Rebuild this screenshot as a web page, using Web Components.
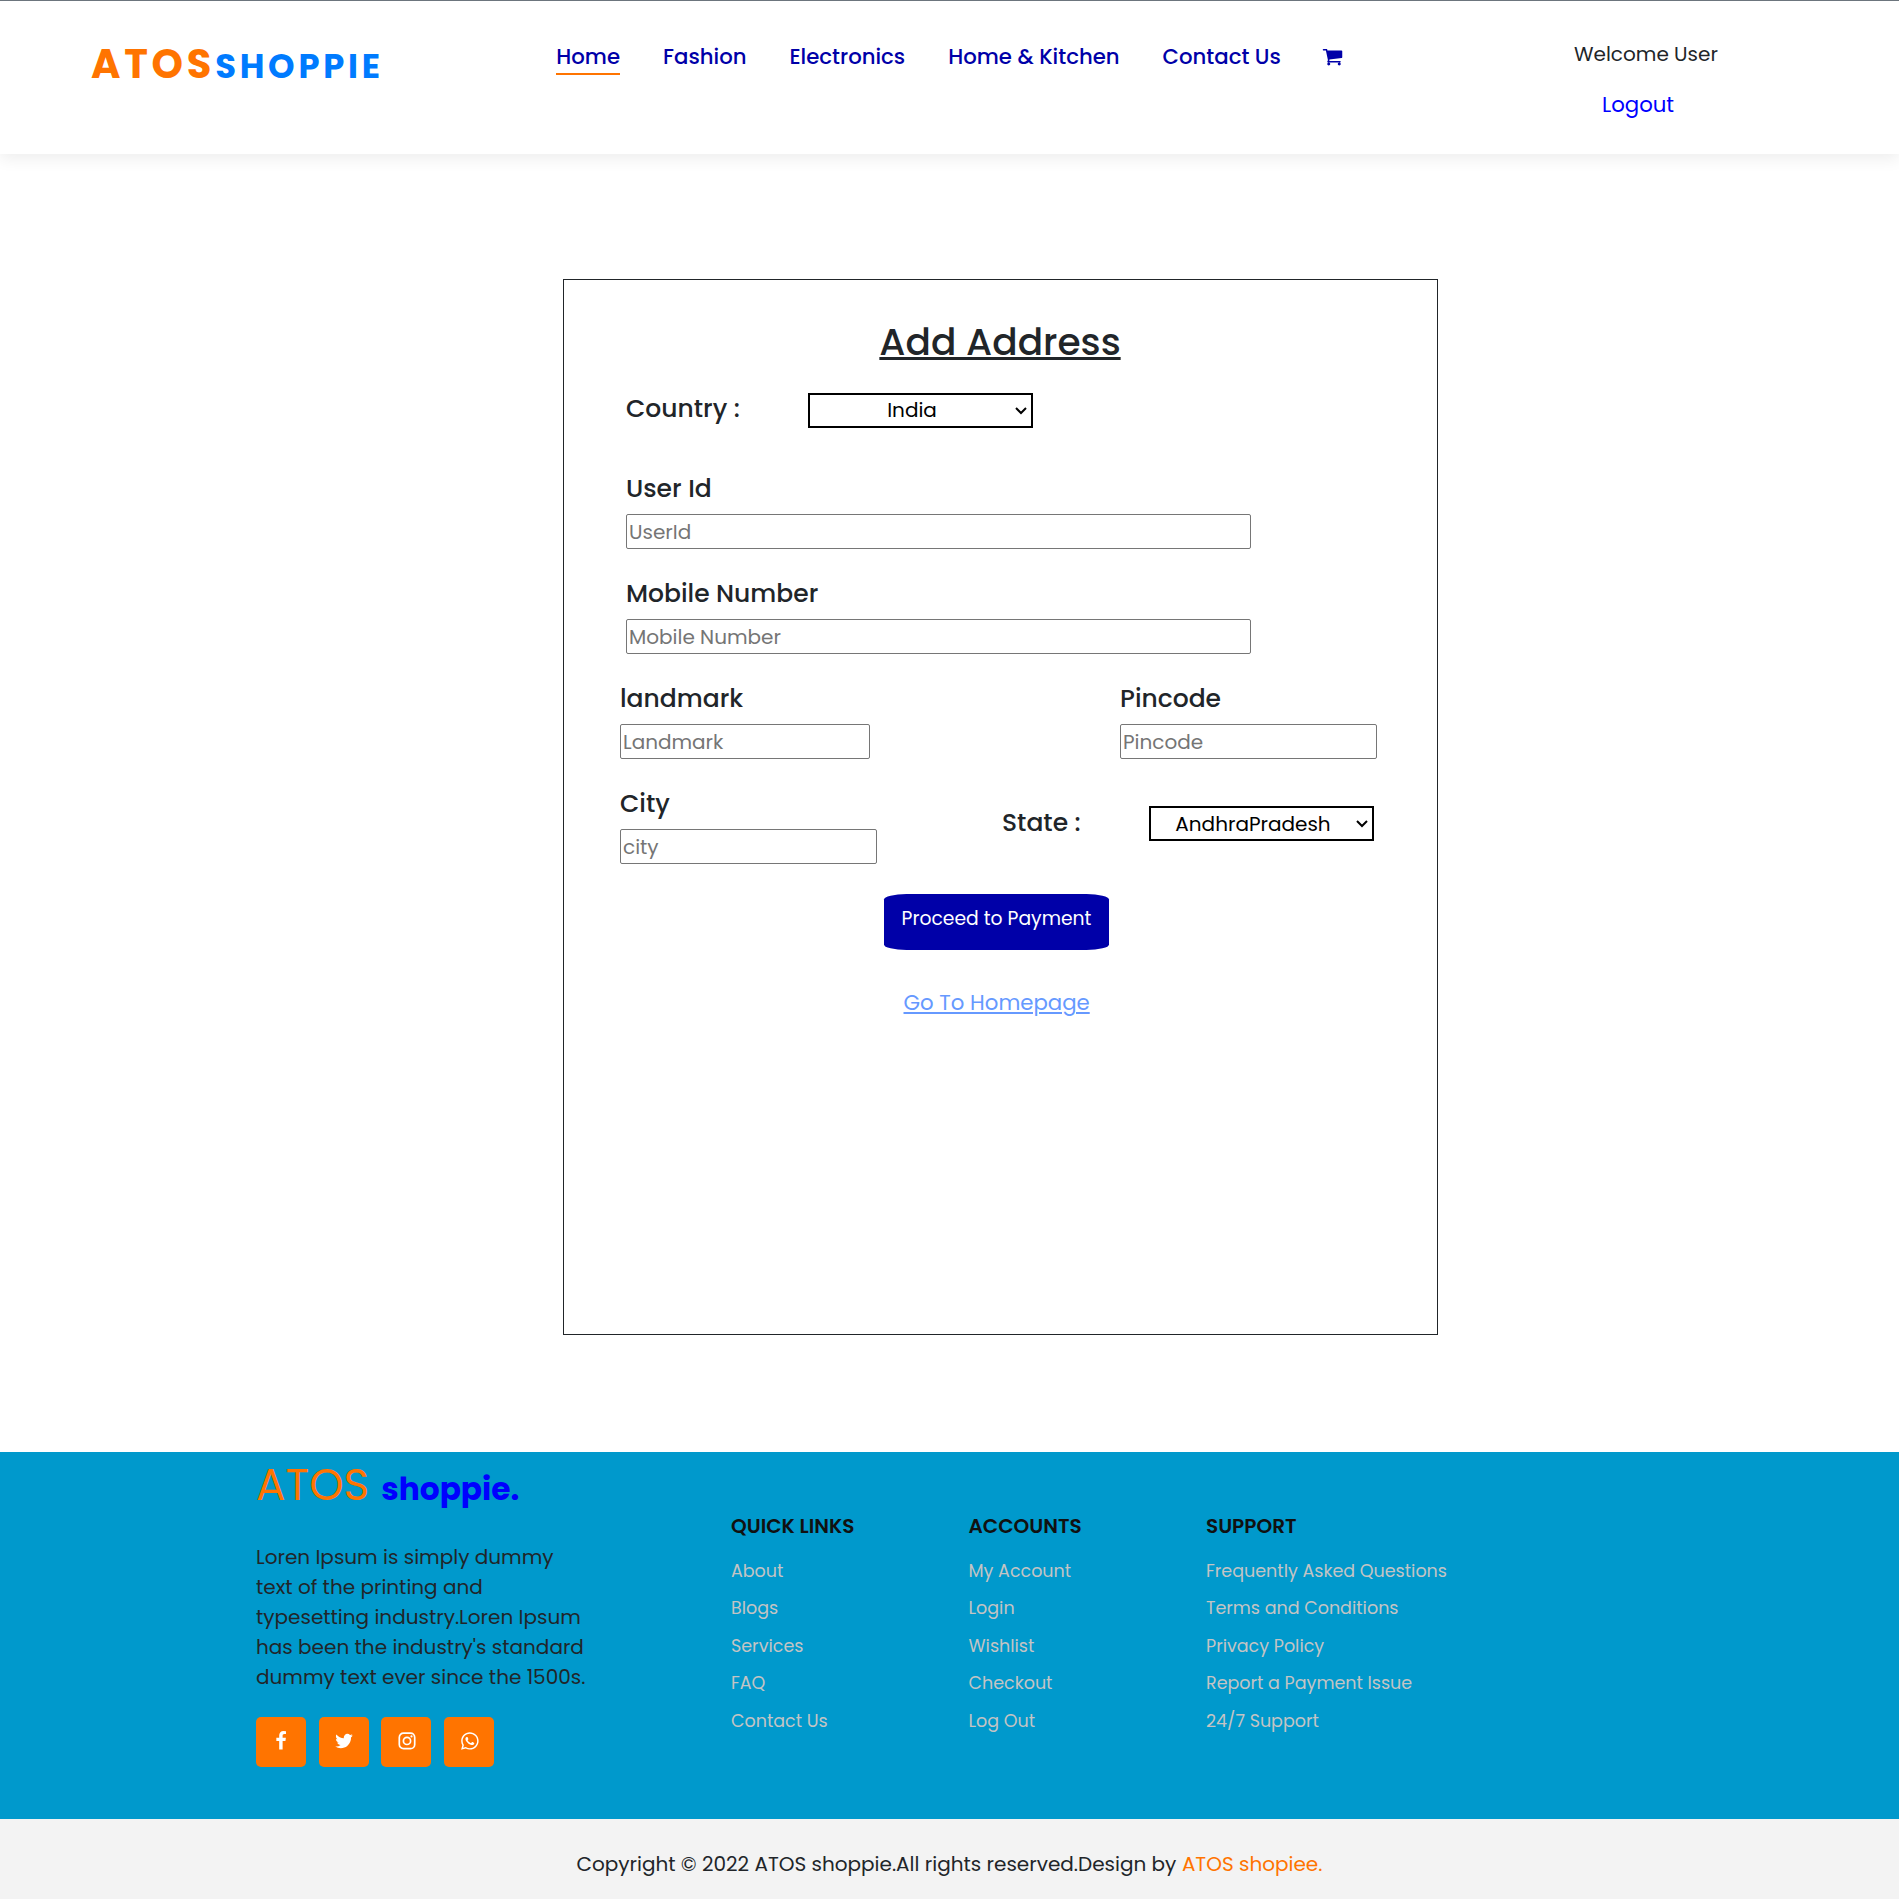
<!DOCTYPE html>
<html lang="en">
<head>
<meta charset="utf-8">
<title>ATOS Shoppie - Add Address</title>
<style>
  html, body { margin: 0; background: #fff; }
  body { font-family: Poppins, Inter, "Open Sans", sans-serif; color: #212529; width: 1899px; height: 1899px; overflow: hidden; }
</style>
</head>
<body>
<shop-app></shop-app>
<script>
class Base extends HTMLElement {
  connectedCallback() {
    if (this.shadowRoot) return;
    this.attachShadow({ mode: 'open' }).innerHTML = this.render();
  }
  attr(n, d = '') { return this.getAttribute(n) ?? d; }
}

/* One unwrapped line of text: size, weight, line height. */
customElements.define('text-line', class extends Base {
  render() {
    return `<style>:host{display:block;flex:none;white-space:nowrap;font-size:${this.attr('size', '20')}px;line-height:${this.attr('lh', '30')}px;font-weight:${this.attr('weight', '400')}}</style><slot></slot>`;
  }
});

customElements.define('fa-icon', class extends Base {
  render() {
    const icons = {
      cart: ['0 0 1792 1792', '<path d="M704 1536q0 52-38 90t-90 38-90-38-38-90 38-90 90-38 90 38 38 90zm896 0q0 52-38 90t-90 38-90-38-38-90 38-90 90-38 90 38 38 90zm128-1088v512q0 24-16.5 42.5t-40.5 21.5l-1044 122q13 60 13 70 0 16-24 64h920q26 0 45 19t19 45-19 45-45 19h-1024q-26 0-45-19t-19-45q0-11 8-31.5t16-36 21.5-40 15.5-29.5l-177-823h-204q-26 0-45-19t-19-45 19-45 45-19h256q16 0 28.5 6.5t19.5 15.5 13 24.5 8 26 5.5 29.5 4.5 26h1201q26 0 45 19t19 45z"/>'],
      facebook: ['0 0 1792 1792', '<path d="M1343 12v264h-157q-86 0-116 36t-30 108v189h293l-39 296h-254v759h-306v-759h-255v-296h255v-218q0-186 104-288.5t277-102.5q147 0 228 12z"/>'],
      twitter: ['0 0 1792 1792', '<path d="M1684 408q-67 98-162 167 1 14 1 42 0 130-38 259.5t-115.5 248.5-184.5 210.5-258 146-323 54.5q-271 0-496-145 35 4 78 4 225 0 401-138-105-2-188-64.5t-114-159.5q33 5 61 5 43 0 85-11-112-23-185.5-111.5t-73.5-205.5v-4q68 38 146 41-66-44-105-115t-39-154q0-88 44-163 121 149 294.5 238.5t371.5 99.5q-8-38-8-74 0-134 94.5-228.5t228.5-94.5q140 0 236 102 109-21 205-78-37 115-142 178 93-10 186-50z"/>'],
      instagram: ['0 0 20 20', '<rect x="2.3" y="2.2" width="15.4" height="15.4" rx="4.2" fill="none" stroke="currentColor" stroke-width="1.7"/><circle cx="10" cy="9.9" r="3.6" fill="none" stroke="currentColor" stroke-width="1.7"/><circle cx="14.5" cy="5.4" r="1.1"/>'],
      whatsapp: ['-28 0 512 512', '<path d="M380.9 97.1C339 55.1 283.2 32 223.9 32c-122.4 0-222 99.6-222 222 0 39.1 10.2 77.3 29.6 111L0 480l117.7-30.9c32.4 17.7 68.9 27 106.1 27h.1c122.3 0 224.1-99.6 224.1-222 0-59.3-25.2-115-67.1-157zm-157 341.6c-33.2 0-65.7-8.9-94-25.7l-6.7-4-69.8 18.3L72 359.2l-4.4-7c-18.5-29.4-28.2-63.3-28.2-98.2 0-101.7 82.8-184.5 184.6-184.5 49.3 0 95.6 19.2 130.4 54.1 34.8 34.9 56.2 81.2 56.1 130.5 0 101.8-84.9 184.6-186.6 184.6zm101.2-138.2c-5.5-2.8-32.8-16.2-37.9-18-5.1-1.9-8.8-2.8-12.5 2.8-3.7 5.6-14.3 18-17.6 21.8-3.2 3.7-6.5 4.2-12 1.4-32.6-16.3-54-29.1-75.5-66-5.7-9.8 5.7-9.1 16.3-30.3 1.8-3.7.9-6.9-.5-9.7-1.4-2.8-12.5-30.1-17.1-41.2-4.5-10.8-9.1-9.3-12.5-9.3-3.2-.2-6.9-.2-10.6-.2-3.7 0-9.7 1.4-14.8 6.9-5.1 5.6-19.4 19-19.4 46.3 0 27.3 19.9 53.7 22.6 57.4 2.8 3.7 39.1 59.7 94.8 83.8 35.2 15.2 49 16.5 66.6 13.9 10.7-1.6 32.8-13.4 37.4-26.4 4.6-13 4.6-24.1 3.2-26.4-1.3-2.5-5-3.9-10.5-6.6z"/>']
    };
    const [vb, body] = icons[this.attr('name')], s = this.attr('size', '20');
    return `<style>:host{display:block;flex:none;width:${s}px;height:${s}px}svg{display:block;fill:currentColor}</style>
      <svg viewBox="${vb}" width="${s}" height="${s}">${body}</svg>`;
  }
});

customElements.define('shop-header', class extends Base {
  render() {
    return `<style>
      :host{display:grid;grid-template-columns:465px 1018px 1fr;box-sizing:border-box;height:154px;padding-left:91px;border-top:1px solid #6c757d;background:#fff;box-shadow:0 5px 15px rgba(0,0,0,.07)}
      .logo{display:flex;align-items:baseline;padding-top:38px;letter-spacing:3.75px}
      .a{color:#ff7400}.b{color:#007bff}
      nav{display:flex;align-items:flex-start;gap:43px;padding:40px 0 0 .3px;color:#0000a8}
      .on{border-bottom:2px solid #ff7400;padding-bottom:1px}
      .cart{margin:5px 0 0 -2px}
      .user{padding-top:38px}
      .out{margin:20px 0 0 28px;color:#00f}
    </style>
    <div class="logo"><text-line class="a" size="40" weight="700" lh="50">ATOS</text-line><text-line class="b" size="33.75" weight="700" lh="50">SHOPPIE</text-line></div>
    <nav><text-line class="on" size="21.25" weight="500" lh="31">Home</text-line><text-line size="21.25" weight="500" lh="31">Fashion</text-line><text-line size="21.25" weight="500" lh="31">Electronics</text-line><text-line size="21.25" weight="500" lh="31">Home &amp; Kitchen</text-line><text-line size="21.25" weight="500" lh="31">Contact Us</text-line><fa-icon class="cart" name="cart" size="21"></fa-icon></nav>
    <div class="user"><text-line>Welcome User</text-line><text-line class="out" size="21.25" lh="31">Logout</text-line></div>`;
  }
});

customElements.define('form-field', class extends Base {
  render() {
    return `<style>:host{display:flex;flex-direction:column;gap:10px;width:${this.attr('width')}px}
      input{box-sizing:border-box;width:100%;height:35px;margin:0;padding:1px 2px;border:1px solid #767676;border-radius:2px;background:#fff;font:400 20px Poppins,Inter,sans-serif}
      input::placeholder{color:#757575;opacity:1}</style>
      <text-line size="25" weight="500" lh="31">${this.attr('label')}</text-line><input type="text" placeholder="${this.attr('hint')}">`;
  }
});

customElements.define('form-select', class extends Base {
  render() {
    return `<style>:host{display:block;width:225px;height:35px}
      select{display:block;zoom:1.25;box-sizing:border-box;width:180px;height:28px;margin:0;padding:0 1.6px var(--lift,0) 0;border:2px solid #000;border-radius:0;background:#fff;color:#000;text-align:center;font:400 16px Poppins,Inter,sans-serif}</style>
      <select><option selected>${this.attr('value')}</option></select>`;
  }
});

customElements.define('address-form', class extends Base {
  render() {
    return `<style>
      :host{display:flex;flex-direction:column;box-sizing:border-box;width:875px;height:1056px;margin:125px 0 0 563px;border:1px solid #212529;background:#fff}
      .title{align-self:center;margin:40px 1px 0 0;text-decoration:underline;text-decoration-thickness:3px;text-underline-offset:2px}
      .row{display:flex;align-items:flex-start;margin-top:29px}
      .in{padding-left:62px}.out{padding-left:56px}
      .country{--lift:1.6px}.country text-line{width:182px}.u{margin-top:45px}
      .pin{margin-left:250px}
      .state{width:147px;margin:19px 0 0 125px}.sel{margin-top:18px}
      button{display:flex;justify-content:center;align-items:flex-start;width:225px;height:56px;margin:30px 0 0 320px;padding:11px 0 0;border:0;border-radius:10%;background:#0000a8;color:#fff;font-family:inherit}
      .home{align-self:flex-start;margin:37px 0 0 339.5px;color:#69f;text-decoration:underline;text-decoration-thickness:2px;text-underline-offset:2px}
    </style>
    <text-line class="title" size="37.5" weight="500" lh="44">Add Address</text-line>
    <div class="row in country"><text-line size="25" weight="500" lh="31">Country :</text-line><form-select value="India"></form-select></div>
    <div class="row in u"><form-field width="625" label="User Id" hint="UserId"></form-field></div>
    <div class="row in"><form-field width="625" label="Mobile Number" hint="Mobile Number"></form-field></div>
    <div class="row out"><form-field width="250" label="landmark" hint="Landmark"></form-field><form-field class="pin" width="257" label="Pincode" hint="Pincode"></form-field></div>
    <div class="row out"><form-field width="257" label="City" hint="city"></form-field><text-line class="state" size="25" weight="500" lh="31">State :</text-line><form-select class="sel" value="AndhraPradesh"></form-select></div>
    <button><text-line size="18.75" lh="27">Proceed to Payment</text-line></button>
    <text-line class="home" size="21.25" lh="31">Go To Homepage</text-line>`;
  }
});

customElements.define('link-column', class extends Base {
  render() {
    return `<style>:host{display:block;padding-top:59px}.h{color:#111;margin-bottom:11.8px}.l{color:#c4c4c4}</style>
      <text-line class="h" weight="600">${this.attr('heading')}</text-line>
      ${this.attr('items').split('|').map(t => `<text-line class="l" size="17.5" lh="37.5">${t}</text-line>`).join('')}`;
  }
});

customElements.define('shop-footer', class extends Base {
  render() {
    return `<style>
      :host{display:block;margin-top:117px}
      .main{display:grid;grid-template-columns:475px 237.5px 237.5px 1fr;box-sizing:border-box;height:367px;padding-left:256px;background:#09c}
      .brand{display:flex;align-items:baseline;height:50px;padding:7.5px 0 32.5px}
      .a{color:#ff7400}.b{color:#00f;margin-left:12px}
      .social{display:flex;gap:12.7px;margin-top:25px}
      .social div{display:flex;align-items:center;justify-content:center;box-sizing:border-box;width:50px;height:50px;padding-bottom:2px;border-radius:5px;background:#ff7400;color:#fff}
      .social .r{padding-left:1px}
      .copy{display:flex;gap:5.5px;box-sizing:border-box;height:80px;padding:30px 0 0 576.5px;background:#f3f3f3}
    </style>
    <div class="main">
      <div>
        <div class="brand"><text-line class="a" size="43.75" lh="50">ATOS</text-line><text-line class="b" size="31.25" lh="50" weight="700">shoppie.</text-line></div>
        <text-line>Loren Ipsum is simply dummy</text-line>
        <text-line>text of the printing and</text-line>
        <text-line>typesetting industry.Loren Ipsum</text-line>
        <text-line>has been the industry's standard</text-line>
        <text-line>dummy text ever since the 1500s.</text-line>
        <div class="social"><div><fa-icon name="facebook"></fa-icon></div><div><fa-icon name="twitter"></fa-icon></div><div class="r"><fa-icon name="instagram"></fa-icon></div><div class="r"><fa-icon name="whatsapp"></fa-icon></div></div>
      </div>
      <link-column heading="QUICK LINKS" items="About|Blogs|Services|FAQ|Contact Us"></link-column>
      <link-column heading="ACCOUNTS" items="My Account|Login|Wishlist|Checkout|Log Out"></link-column>
      <link-column heading="SUPPORT" items="Frequently Asked Questions|Terms and Conditions|Privacy Policy|Report a Payment Issue|24/7 Support"></link-column>
    </div>
    <div class="copy"><text-line>Copyright © 2022 ATOS shoppie.All rights reserved.Design by</text-line><text-line class="a">ATOS shopiee.</text-line></div>`;
  }
});

customElements.define('shop-app', class extends Base {
  render() {
    return `<style>:host{display:flex;flex-direction:column}</style><shop-header></shop-header><address-form></address-form><shop-footer></shop-footer>`;
  }
});
</script>
</body>
</html>
